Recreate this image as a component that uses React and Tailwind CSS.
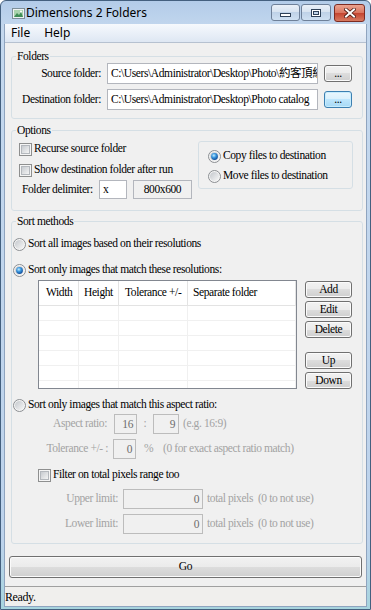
import React from 'react';

const SERIF = "font-['Liberation_Serif','Noto_Sans_CJK_TC',serif] text-[11.5px] tracking-[-0.4px]";

function TitleIcon() {
  return (
    <svg width="13" height="13" viewBox="0 0 13 13">
      <rect x="0.5" y="1.5" width="12" height="10" fill="#eef2f3" stroke="#7d8f99" />
      <rect x="2" y="3" width="9" height="7" fill="#a9d3ad" />
      <path d="M2 10 L5 6 L7 8 L9 5 L11 10 Z" fill="#3f8d55" />
      <circle cx="9" cy="4.6" r="1" fill="#ffffff" />
    </svg>
  );
}

function CheckBox() {
  return (
    <svg width="13" height="13" viewBox="0 0 13 13" className="shrink-0">
      <defs>
        <linearGradient id="cbfill" x1="0" y1="0" x2="1" y2="1">
          <stop offset="0" stopColor="#c4c8cd" />
          <stop offset="1" stopColor="#f7f7f7" />
        </linearGradient>
      </defs>
      <rect x="0.5" y="0.5" width="12" height="12" fill="#f5f5f5" stroke="#8e8f8f" />
      <rect x="2.5" y="2.5" width="8" height="8" fill="url(#cbfill)" stroke="#b4b8bd" />
    </svg>
  );
}

function Radio({ checked }) {
  return (
    <svg width="13" height="13" viewBox="0 0 13 13" className="shrink-0">
      <defs>
        <linearGradient id="rfill" x1="0" y1="0" x2="1" y2="1">
          <stop offset="0" stopColor="#c3c7cc" />
          <stop offset="1" stopColor="#f8f8f8" />
        </linearGradient>
        <radialGradient id="rdot" cx="0.4" cy="0.35" r="0.7">
          <stop offset="0" stopColor="#c4ecff" />
          <stop offset="0.45" stopColor="#3a97de" />
          <stop offset="1" stopColor="#0b4391" />
        </radialGradient>
      </defs>
      <circle cx="6.5" cy="6.5" r="6" fill="#f5f5f5" stroke="#8b8e92" />
      <circle cx="6.5" cy="6.5" r="4.6" fill="url(#rfill)" />
      {checked && <circle cx="6.5" cy="6.5" r="3.4" fill="url(#rdot)" />}
    </svg>
  );
}

function Btn({ children, className = '', focus }) {
  const look = focus
    ? 'border-[#3c7fb1] bg-[linear-gradient(#eaf6fd,#d9f0fc_50%,#bee6fd_50%,#a7d9f5)] shadow-[inset_0_0_0_1px_#c7ecfd]'
    : 'border-[#707070] bg-[linear-gradient(#f2f2f2,#ebebeb_50%,#dddddd_50%,#cfcfcf)] shadow-[inset_0_0_0_1px_#fbfbfb]';
  return (
    <div className={`flex items-center justify-center rounded-[3px] border text-black leading-none ${look} ${className}`}>
      {children}
    </div>
  );
}

function ResList() {
  const cells = ['w-[40px] pl-[7px]', 'w-[40px] pl-[5px]', 'w-[69px] pl-[6px]', 'w-[108px] pl-[5px]'];
  const heads = ['Width', 'Height', 'Tolerance +/-', 'Separate folder'];
  const rows = [0, 1, 2, 3, 4, 5];
  return (
    <div className="ml-[26px] w-[259px] h-[109px] border border-[#828790] bg-white overflow-hidden">
      <div className="flex h-[25px] border-b border-[#e3e3e3]">
        {heads.map((h, i) => (
          <div key={h} className={`${cells[i]} shrink-0 flex items-center border-r border-[#e3e3e3] whitespace-nowrap`}>
            {h}
          </div>
        ))}
        <div className="flex-1" />
      </div>
      {rows.map((r) => (
        <div key={r} className="flex h-[15px] border-b border-[#f0f0f0]">
          {cells.map((c, i) => (
            <div key={i} className={`${c} shrink-0 border-r border-[#f0f0f0]`} />
          ))}
          <div className="flex-1" />
        </div>
      ))}
    </div>
  );
}

function GrayBox({ children, className = '' }) {
  return (
    <div className={`h-[20px] border border-[#bcbcbc] bg-[#f0f0f0] text-right pr-[3px] leading-[18px] text-[#6d6d6d] ${className}`}>
      {children}
    </div>
  );
}

export default function App() {
  return (
    <div className="w-[371px] h-[610px] flex flex-col border border-[#44607f] rounded-t-[6px] bg-[linear-gradient(#b3cce9,#c4d8ee_30px,#bdd3ec_540px,#a7d4de)] px-[3px] pb-[2px] overflow-hidden">
      {/* title bar */}
      <div className="h-[23px] flex items-start shrink-0">
        <div className="ml-[8px] mt-[6px]">
          <TitleIcon />
        </div>
        <div className="ml-[1px] mt-[4px] text-[12px] leading-[16px] text-black font-['Noto_Sans',sans-serif]">
          Dimensions 2 Folders
        </div>
        <div className="ml-auto mr-[2px] mt-[3px] flex items-start">
          <div className="w-[29px] h-[17px] rounded-[3px] border border-[#6e8099] bg-[linear-gradient(#e9f0f8,#d6e2f0_50%,#bfd2e8_50%,#cfe0f2)] flex items-end justify-center pb-[3px]">
            <svg width="11" height="4" viewBox="0 0 11 4">
              <rect x="0.5" y="0.5" width="10" height="3" fill="#ffffff" stroke="#2f4158" />
            </svg>
          </div>
          <div className="ml-[1px] w-[30px] h-[17px] rounded-[3px] border border-[#6e8099] bg-[linear-gradient(#e9f0f8,#d6e2f0_50%,#bfd2e8_50%,#cfe0f2)] flex items-center justify-center">
            <svg width="10" height="8" viewBox="0 0 10 8">
              <rect x="0.5" y="0.5" width="9" height="7" fill="none" stroke="#2f4158" />
              <rect x="1.5" y="1.5" width="7" height="5" fill="none" stroke="#ffffff" />
              <rect x="2.5" y="2.5" width="5" height="3" fill="none" stroke="#2f4158" />
            </svg>
          </div>
          <div className="ml-[3px] w-[31px] h-[18px] rounded-[3px] border border-[#7c2b22] bg-[linear-gradient(#eba38f,#d9745f_50%,#c4432f_50%,#d77a61)] flex items-center justify-center">
            <svg width="12" height="10" viewBox="0 0 12 10">
              <path d="M2 1.5 L10 8.5 M10 1.5 L2 8.5" stroke="#4a1812" strokeWidth="3.6" strokeLinecap="square" />
              <path d="M2 1.5 L10 8.5 M10 1.5 L2 8.5" stroke="#ffffff" strokeWidth="2" strokeLinecap="square" />
            </svg>
          </div>
        </div>
      </div>

      {/* client area */}
      <div className="flex-1 min-h-0 flex flex-col border-x border-b border-[#8fa4bf]">
        {/* menu */}
        <div className="h-[19px] shrink-0 flex items-center border-b border-[#b6c1d0] bg-[linear-gradient(#f6f9fd,#dee7f3)] text-[12px] text-black font-['Noto_Sans',sans-serif]">
          <span className="ml-[6px]">File</span>
          <span className="ml-[14px]">Help</span>
        </div>

        {/* body */}
        <div className={`flex-1 bg-[#f0f0f0] text-black ${SERIF}`}>
          {/* Folders */}
          <fieldset className="ml-[6px] mt-[6px] w-[352px] rounded-[3px] border border-[#d5dfe5] pb-[8px]">
            <legend className="ml-[4px] px-[1px] leading-[14px]">Folders</legend>
            <div className="flex items-center h-[21px]">
              <div className="w-[89px] text-right whitespace-nowrap">Source folder:</div>
              <div className="ml-[6px] w-[211px] h-[21px] border border-[#b3b6bd] bg-white pl-[3px] leading-[19px] overflow-hidden whitespace-nowrap">
                C:\Users\Administrator\Desktop\Photo\約客頂級
              </div>
              <Btn className="ml-[6px] w-[28px] h-[17px]">...</Btn>
            </div>
            <div className="mt-[5px] flex items-center h-[21px]">
              <div className="w-[89px] text-right whitespace-nowrap">Destination folder:</div>
              <div className="ml-[6px] w-[211px] h-[21px] border border-[#b3b6bd] bg-white pl-[3px] leading-[19px] overflow-hidden whitespace-nowrap">
                C:\Users\Administrator\Desktop\Photo catalog
              </div>
              <Btn focus className="ml-[6px] w-[28px] h-[17px]">...</Btn>
            </div>
          </fieldset>

          {/* Options */}
          <fieldset className="ml-[6px] mt-[4px] w-[352px] rounded-[3px] border border-[#d5dfe5] pb-[11px]">
            <legend className="ml-[4px] px-[1px] leading-[14px]">Options</legend>
            <div className="flex items-start">
              <div className="w-[186px]">
                <div className="mt-[5px] h-[14px] flex items-center pl-[7px] gap-[2px] whitespace-nowrap">
                  <CheckBox />
                  <span>Recurse source folder</span>
                </div>
                <div className="mt-[7px] h-[14px] flex items-center pl-[7px] gap-[2px] whitespace-nowrap">
                  <CheckBox />
                  <span>Show destination folder after run</span>
                </div>
                <div className="mt-[3px] h-[19px] flex items-center pl-[10px]">
                  <span className="w-[77px] whitespace-nowrap">Folder delimiter:</span>
                  <div className="w-[28px] h-[19px] border border-[#b3b6bd] bg-white pl-[3px] leading-[17px]">x</div>
                  <div className="ml-[6px] w-[59px] h-[19px] border border-[#b3b6bd] bg-[#f0f0f0] text-center leading-[17px]">
                    800x600
                  </div>
                </div>
              </div>
              <div className="mt-[4px] w-[155px] h-[48px] rounded-[3px] border border-[#d5dfe5] pl-[9px]">
                <div className="mt-[7px] h-[14px] flex items-center gap-[2px] whitespace-nowrap">
                  <Radio checked />
                  <span>Copy files to destination</span>
                </div>
                <div className="mt-[6px] h-[14px] flex items-center gap-[2px] whitespace-nowrap">
                  <Radio />
                  <span>Move files to destination</span>
                </div>
              </div>
            </div>
          </fieldset>

          {/* Sort methods */}
          <fieldset className="ml-[6px] mt-[3px] w-[352px] rounded-[3px] border border-[#d5dfe5] pb-[9px]">
            <legend className="ml-[4px] px-[1px] leading-[14px]">Sort methods</legend>
            <div className="mt-[9px] h-[14px] flex items-center pl-[1px] gap-[2px] whitespace-nowrap">
              <Radio />
              <span>Sort all images based on their resolutions</span>
            </div>
            <div className="mt-[12px] h-[14px] flex items-center pl-[1px] gap-[2px] whitespace-nowrap">
              <Radio checked />
              <span>Sort only images that match these resolutions:</span>
            </div>
            <div className="mt-[3px] flex items-start">
              <ResList />
              <div className="ml-[8px] w-[47px] flex flex-col">
                <Btn className="mt-[1px] h-[17px]">Add</Btn>
                <Btn className="mt-[3px] h-[17px]">Edit</Btn>
                <Btn className="mt-[3px] h-[17px]">Delete</Btn>
                <Btn className="mt-[14px] h-[17px]">Up</Btn>
                <Btn className="mt-[3px] h-[17px]">Down</Btn>
              </div>
            </div>
            <div className="mt-[9px] h-[14px] flex items-center pl-[1px] gap-[2px] whitespace-nowrap">
              <Radio />
              <span>Sort only images that match this aspect ratio:</span>
            </div>
            <div className="mt-[2px] h-[20px] flex items-center whitespace-nowrap text-[#a3a3a3]">
              <span className="w-[95px] text-right">Aspect ratio:</span>
              <GrayBox className="ml-[7px] w-[23px]">16</GrayBox>
              <span className="w-[16px] text-center">:</span>
              <GrayBox className="w-[26px]">9</GrayBox>
              <span className="ml-[4px]">(e.g. 16:9)</span>
            </div>
            <div className="mt-[5px] h-[20px] flex items-center whitespace-nowrap text-[#a3a3a3]">
              <span className="w-[96px] text-right">Tolerance +/- :</span>
              <GrayBox className="ml-[5px] w-[23px]">0</GrayBox>
              <span className="ml-[8px] w-[11px]">%</span>
              <span className="ml-[8px]">(0 for exact aspect ratio match)</span>
            </div>
            <div className="mt-[9px] h-[14px] flex items-center pl-[26px] gap-[2px] whitespace-nowrap">
              <CheckBox />
              <span>Filter on total pixels range too</span>
            </div>
            <div className="mt-[7px] h-[20px] flex items-center whitespace-nowrap text-[#a3a3a3]">
              <span className="w-[106px] text-right">Upper limit:</span>
              <GrayBox className="ml-[5px] w-[80px]">0</GrayBox>
              <span className="ml-[4px]">{'total pixels\u00a0 (0 to not use)'}</span>
            </div>
            <div className="mt-[5px] h-[20px] flex items-center whitespace-nowrap text-[#a3a3a3]">
              <span className="w-[106px] text-right">Lower limit:</span>
              <GrayBox className="ml-[5px] w-[80px]">0</GrayBox>
              <span className="ml-[4px]">{'total pixels\u00a0 (0 to not use)'}</span>
            </div>
          </fieldset>

          <Btn className="mt-[12px] ml-[4px] w-[353px] h-[22px]">Go</Btn>
        </div>

        {/* status bar */}
        <div className={`h-[20px] shrink-0 border-t border-[#a0a0a0] bg-[#f0efed] flex items-center text-black ${SERIF}`}>
          <span className="ml-[0px] text-[12px]">Ready.</span>
        </div>
      </div>
    </div>
  );
}
